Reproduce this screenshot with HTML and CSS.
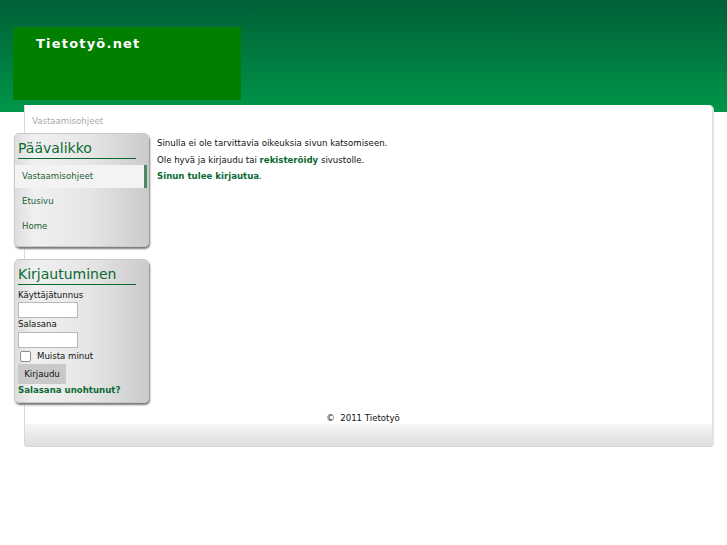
FILE: index.html
```html
<!DOCTYPE html>
<html lang="fi">
<head>
<meta charset="utf-8">
<title>Tietotyö.net</title>
<link rel="stylesheet" href="styles.css">
</head>
<body>
<header class="header">
  <div class="logo">Tietotyö.net</div>
</header>
<div class="page">
  <div class="breadcrumb">Vastaamisohjeet</div>
  <div class="layout">
    <aside class="sidebar">
      <div class="module">
        <h3 class="module-title">Päävalikko</h3>
        <ul class="menu">
          <li class="menu-item active">Vastaamisohjeet</li>
          <li class="menu-item">Etusivu</li>
          <li class="menu-item">Home</li>
        </ul>
      </div>
      <div class="module">
        <h3 class="module-title">Kirjautuminen</h3>
        <form class="login">
          <label class="field-label">Käyttäjätunnus</label>
          <input class="field" type="text">
          <label class="field-label">Salasana</label>
          <input class="field" type="password">
          <label class="remember"><span class="checkbox"></span>Muista minut</label>
          <span class="button">Kirjaudu</span>
          <a class="forgot">Salasana unohtunut?</a>
        </form>
      </div>
    </aside>
    <main class="content">
      <p>Sinulla ei ole tarvittavia oikeuksia sivun katsomiseen.</p>
      <p>Ole hyvä ja kirjaudu tai <a class="link">rekisteröidy</a> sivustolle.</p>
      <p><a class="link">Sinun tulee kirjautua</a>.</p>
    </main>
  </div>
  <div class="copyright">&#169;&nbsp; 2011 Tietotyö</div>
  <div class="footer-bar"></div>
</div>
</body>
</html>
```
FILE: styles.css
```css
html, body {
  margin: 0;
  padding: 0;
}
body {
  font-family: "DejaVu Sans", Verdana, sans-serif;
  font-size: 8.6px;
  color: #111;
  background: #fff linear-gradient(#005f36, #00964a) top left / 100% 112px no-repeat;
  width: 727px;
  height: 545px;
  overflow: hidden;
}
.header {
  height: 105px;
  padding: 27px 0 0 13px;
  box-sizing: border-box;
}
.logo {
  width: 228px;
  height: 73px;
  background: #007f00;
  color: #fff;
  font-weight: bold;
  font-size: 13px;
  letter-spacing: 1.2px;
  padding: 9px 0 0 23px;
  box-sizing: border-box;
}
.page {
  margin-left: 24px;
  width: 690px;
  box-sizing: border-box;
  background: #fff;
  border-left: 1px solid #d8d8d8;
  border-right: 2px solid #e2e2e2;
  border-bottom: 1px solid #d6d6d6;
  border-top-right-radius: 5px;
  border-bottom-right-radius: 3px;
  border-bottom-left-radius: 3px;
}
.breadcrumb {
  color: #aaa;
  padding: 11px 0 0 7px;
  height: 28px;
  box-sizing: border-box;
}
.layout {
  display: flex;
  align-items: flex-start;
}
.sidebar {
  margin-left: -11px;
  width: 135px;
  display: flex;
  flex-direction: column;
  gap: 12px;
}
.module {
  background: linear-gradient(to right, #dedede 0%, #f0f0f0 15%, #e6e6e6 55%, #cbcbcb 100%);
  border: 1px solid #c9c9c9;
  border-radius: 5px;
  box-shadow: 1px 2px 2px #7a7a7a;
  padding: 5px 12px 6px 3px;
}
.module-title {
  margin: 0;
  font-size: 14px;
  font-weight: normal;
  color: #0b6a34;
  border-bottom: 1px solid #0b6a34;
  padding: 0 0 1px 0;
  line-height: 18px;
}
.menu {
  list-style: none;
  margin: 6px -12px 0 -3px;
  padding: 0;
}
.menu-item {
  height: 25px;
  line-height: 23px;
  padding-left: 7px;
  color: #1d5e34;
}
.menu-item.active {
  background: #f3f3f3;
  border-right: 3px solid #4b8a60;
  height: 23px;
  margin-right: 1px;
  margin-bottom: 2px;
}
.login {
  display: flex;
  flex-direction: column;
  align-items: flex-start;
  padding-top: 4px;
}
.field-label {
  line-height: 12px;
  height: 12px;
}
.field {
  width: 60px;
  height: 16px;
  box-sizing: border-box;
  border: 1px solid #b8b8b8;
  background: #fff;
  margin: 1px 0 0;
  padding: 0;
}
.login .field:nth-of-type(2) {
  margin-top: 2px;
}
.remember {
  display: flex;
  align-items: center;
  height: 12px;
  margin-top: 2px;
}
.checkbox {
  width: 11px;
  height: 11px;
  box-sizing: border-box;
  border: 1px solid #8f8f8f;
  border-radius: 2px;
  background: #fff;
  margin: 0 6px 0 2px;
}
.button {
  margin-top: 2px;
  width: 48px;
  height: 20px;
  line-height: 20px;
  background: #c9c9c9;
  text-align: center;
}
.forgot {
  font-weight: bold;
  color: #0b6a34;
  line-height: 12px;
}
.content {
  padding: 2px 0 0 8px;
}
.content p {
  margin: 0;
  line-height: 16.5px;
}
.link {
  color: #0b6a34;
  font-weight: bold;
}
.copyright {
  text-align: center;
  margin-top: 8px;
  height: 13px;
  line-height: 14px;
  padding-right: 11px;
}
.footer-bar {
  height: 22px;
  background: linear-gradient(#f6f6f6, #dedede);
}
```
